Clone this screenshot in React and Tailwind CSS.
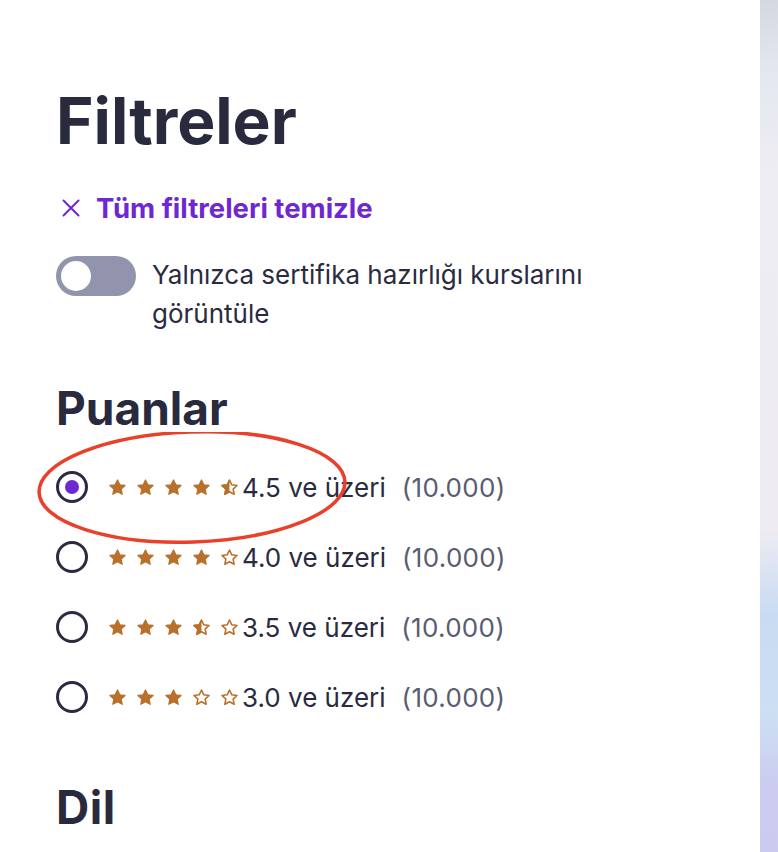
const STAR = 'M12 2.5l2.9 6.1 6.6.8-4.9 4.6 1.3 6.6L12 17.3l-5.9 3.3 1.3-6.6-4.9-4.6 6.6-.8L12 2.5z';

function Star({ kind }) {
  return (
    <svg viewBox="0 0 24 24" className="w-[19px] h-[19px] shrink-0">
      <defs>
        <clipPath id="half-left">
          <rect x="0" y="0" width="12" height="24" />
        </clipPath>
      </defs>
      {kind === 'full' && <path d={STAR} fill="#b8702a" stroke="#b8702a" strokeWidth="1.6" strokeLinejoin="round" />}
      {kind === 'half' && (
        <>
          <path d={STAR} fill="none" stroke="#b8702a" strokeWidth="2" strokeLinejoin="round" />
          <path d={STAR} fill="#b8702a" stroke="#b8702a" strokeWidth="1.6" strokeLinejoin="round" clipPath="url(#half-left)" />
        </>
      )}
      {kind === 'empty' && <path d={STAR} fill="none" stroke="#b8702a" strokeWidth="2" strokeLinejoin="round" />}
    </svg>
  );
}

const ratings = [
  { value: '4.5', stars: ['full', 'full', 'full', 'full', 'half'], selected: true },
  { value: '4.0', stars: ['full', 'full', 'full', 'full', 'empty'] },
  { value: '3.5', stars: ['full', 'full', 'full', 'half', 'empty'] },
  { value: '3.0', stars: ['full', 'full', 'full', 'empty', 'empty'] },
];

function RatingRow({ value, stars, selected }) {
  return (
    <label className="flex items-center h-[70px] cursor-pointer">
      <span className="w-8 h-8 rounded-full border-[3px] border-[#2a2b3f] flex items-center justify-center shrink-0">
        {selected && <span className="w-[14px] h-[14px] rounded-full bg-[#6d28d2]" />}
      </span>
      <span className="flex items-center gap-[9px] ml-5">
        {stars.map((s, i) => (
          <Star key={i} kind={s} />
        ))}
      </span>
      <span className="ml-[3px] text-[26px] text-[#2a2b3f]">{value} ve üzeri</span>
      <span className="ml-4 text-[26px] text-[#5a5c72] tracking-[0.3px]">(10.000)</span>
    </label>
  );
}

export default function App() {
  return (
    <div className="w-[778px] h-[852px] overflow-hidden flex bg-white" style={{ fontFamily: 'Inter, "Noto Sans", sans-serif' }}>
      <main className="flex-1 pl-[56px] pt-[84px]">
        <h1 className="text-[64px] leading-[74px] font-bold text-[#292a3e]">Filtreler</h1>

        <button className="mt-[33px] h-[34px] flex items-center gap-[16px] text-[#6d28d2] ml-[6px]">
          <svg width="18" height="18" viewBox="0 0 18 18" className="shrink-0">
            <path d="M1.5 1.5l15 15M16.5 1.5l-15 15" stroke="currentColor" strokeWidth="2" strokeLinecap="round" />
          </svg>
          <span className="text-[27.5px] leading-[34px] font-bold">Tüm filtreleri temizle</span>
        </button>

        <div className="mt-[30px] flex items-start gap-4">
          <span className="mt-[1px] w-20 h-10 rounded-full bg-[#9194ac] flex items-center px-[5px] shrink-0">
            <span className="w-[30px] h-[30px] rounded-full bg-white" />
          </span>
          <p className="text-[26px] leading-[39px] text-[#2a2b3f] w-[470px]">
            Yalnızca sertifika hazırlığı kurslarını görüntüle
          </p>
        </div>

        <h2 className="mt-[49px] text-[46px] leading-[52px] font-bold text-[#292a3e]">Puanlar</h2>

        <div className="mt-[18px] relative">
          {ratings.map((r) => (
            <RatingRow key={r.value} {...r} />
          ))}
          <svg className="absolute left-[-20px] top-[-20px] pointer-events-none" width="320" height="120" viewBox="0 0 320 120">
            <ellipse cx="156" cy="55" rx="153" ry="55" fill="none" stroke="#e8402a" strokeWidth="3.5" transform="rotate(-2 156 55)" />
          </svg>
        </div>

        <h2 className="mt-[49px] text-[46px] leading-[52px] font-bold text-[#292a3e] tracking-[0.5px]">Dil</h2>
      </main>
      <div className="w-[18px] shrink-0 bg-[linear-gradient(to_bottom,#d3d8e1_0%,#e3e7ef_8%,#eeedf3_20%,#eeecf2_62%,#c9dbf2_72%,#cddff3_84%,#cbccf0_92%,#cbcbef_100%)]" />
    </div>
  );
}
